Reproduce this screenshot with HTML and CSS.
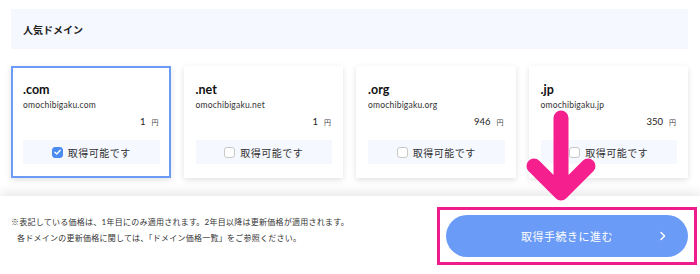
FILE: index.html
```html
<!DOCTYPE html>
<html lang="ja">
<head>
<meta charset="utf-8">
<link rel="stylesheet" href="styles.css">
</head>
<body>
<div class="page">
  <main class="main">
    <div class="band">人気ドメイン</div>
    <div class="cards">
      <div class="card selected">
        <div class="tld">.com</div>
        <div class="domain">omochibigaku.com</div>
        <div class="price"><span class="num">1</span><span class="yen">円</span></div>
        <div class="check"><span class="box on"><svg viewBox="0 0 12 12" width="10" height="10"><path d="M2.5 6.2 L5 8.6 L9.6 3.6" fill="none" stroke="#fff" stroke-width="1.8" stroke-linecap="round" stroke-linejoin="round"/></svg></span><span>取得可能です</span></div>
      </div>
      <div class="card">
        <div class="tld">.net</div>
        <div class="domain">omochibigaku.net</div>
        <div class="price"><span class="num">1</span><span class="yen">円</span></div>
        <div class="check"><span class="box"></span><span>取得可能です</span></div>
      </div>
      <div class="card">
        <div class="tld">.org</div>
        <div class="domain">omochibigaku.org</div>
        <div class="price"><span class="num">946</span><span class="yen">円</span></div>
        <div class="check"><span class="box"></span><span>取得可能です</span></div>
      </div>
      <div class="card">
        <div class="tld">.jp</div>
        <div class="domain">omochibigaku.jp</div>
        <div class="price"><span class="num">350</span><span class="yen">円</span></div>
        <div class="check"><span class="box"></span><span>取得可能です</span></div>
      </div>
    </div>
  </main>
  <footer class="footer">
    <div class="notes">
      <p>※表記している価格は、1年目にのみ適用されます。2年目以降は更新価格が適用されます。</p>
      <p class="indent">各ドメインの更新価格に関しては、「ドメイン価格一覧」をご参照ください。</p>
    </div>
    <div class="frame">
      <div class="btn"><span class="btn-label">取得手続きに進む</span><svg class="chev" viewBox="0 0 10 12" width="8" height="10"><path d="M2.5 1.5 L7 6 L2.5 10.5" fill="none" stroke="#fff" stroke-width="1.8" stroke-linecap="round" stroke-linejoin="round"/></svg></div>
    </div>
  </footer>
  <svg class="arrow" viewBox="0 0 70 100" width="70" height="100"><path d="M35 8 L35 82 M8 56 L35 83 L62 56" fill="none" stroke="#f51f8e" stroke-width="15" stroke-linecap="round" stroke-linejoin="round"/></svg>
</div>
</body>
</html>
```

FILE: styles.css
```css
* { box-sizing: border-box; margin: 0; padding: 0; }
html, body { width: 700px; height: 274px; overflow: hidden; background: #fff; }
body { font-family: "Lato", "Noto Sans CJK JP", sans-serif; color: #222; }
.page { position: relative; width: 700px; height: 274px; display: flex; flex-direction: column; }
.main { padding: 9px 12px 0 11px; height: 196px; }
.band { height: 40px; background: #f5f8fe; display: flex; align-items: center; padding-left: 12px; font-size: 10px; font-weight: 700; color: #222; }
.cards { margin-top: 17px; display: grid; grid-template-columns: repeat(4, 1fr); gap: 13px; }
.card { height: 112px; background: #fff; box-shadow: 0 2px 6px rgba(0,0,0,0.12); padding: 17px 11px 0 12px; display: flex; flex-direction: column; }
.card.selected { border: 2px solid #6a9bf6; padding: 15px 9px 0 10px; }
.tld { font-size: 12.5px; font-weight: 700; line-height: 14px; color: #111; }
.domain { font-size: 8.5px; line-height: 10px; margin-top: 3px; color: #333; letter-spacing: 0.2px; }
.price { display: flex; justify-content: flex-end; align-items: baseline; gap: 6px; margin-top: 6px; padding-right: 1px; height: 12px; }
.num { font-size: 9.5px; color: #222; }
.yen { font-size: 7px; color: #444; }
.check { margin-top: 12px; height: 24px; background: #f5f8fe; display: flex; align-items: center; justify-content: center; gap: 5px; font-size: 10px; color: #333; letter-spacing: 0.5px; }
.box { width: 11px; height: 11px; border: 1px solid #c8c8c8; border-radius: 3px; background: #fff; display: flex; align-items: center; justify-content: center; }
.box.on { background: #4c8cf2; border-color: #4c8cf2; }
.footer { flex: 1; background: #fff; box-shadow: 0 -4px 10px rgba(0,0,0,0.09); display: flex; justify-content: space-between; align-items: flex-start; padding: 11px 3px 0 11px; }
.notes { font-size: 8px; line-height: 16px; color: #333; padding-top: 7px; letter-spacing: 0.25px; }
.indent { padding-left: 6px; }
.frame { width: 260px; height: 58px; border: 3px solid #ee1c8d; padding: 5px 6px; }
.btn { height: 42px; border-radius: 21px; background: #6a9bf6; position: relative; display: flex; align-items: center; justify-content: center; color: #fff; font-size: 11px; letter-spacing: 0.5px; }
.btn-label { margin-left: 0; }
.chev { position: absolute; right: 21px; top: 16px; }
.arrow { position: absolute; left: 526px; top: 110px; }
```
